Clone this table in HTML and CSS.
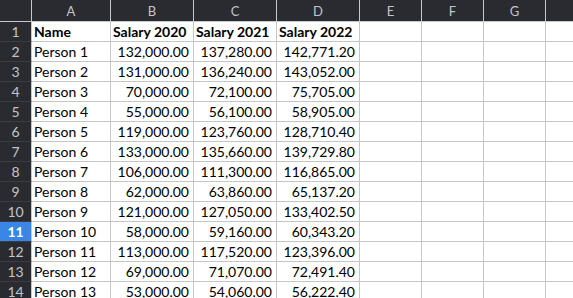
FILE: index.html
```html
<!DOCTYPE html>
<html>
<head>
<meta charset="utf-8">
<link rel="stylesheet" href="styles.css">
</head>
<body>
<div class="sheet">
  <div class="ch corner"></div>
  <div class="ch">A</div><div class="ch">B</div><div class="ch">C</div><div class="ch">D</div><div class="ch">E</div><div class="ch">F</div><div class="ch">G</div><div class="ch last"></div>

  <div class="rh">1</div><div class="c b">Name</div><div class="c b">Salary 2020</div><div class="c b">Salary 2021</div><div class="c b">Salary 2022</div><div class="c"></div><div class="c"></div><div class="c"></div><div class="c last"></div>
  <div class="rh">2</div><div class="c">Person 1</div><div class="c n">132,000.00</div><div class="c n">137,280.00</div><div class="c n">142,771.20</div><div class="c"></div><div class="c"></div><div class="c"></div><div class="c last"></div>
  <div class="rh">3</div><div class="c">Person 2</div><div class="c n">131,000.00</div><div class="c n">136,240.00</div><div class="c n">143,052.00</div><div class="c"></div><div class="c"></div><div class="c"></div><div class="c last"></div>
  <div class="rh">4</div><div class="c">Person 3</div><div class="c n">70,000.00</div><div class="c n">72,100.00</div><div class="c n">75,705.00</div><div class="c"></div><div class="c"></div><div class="c"></div><div class="c last"></div>
  <div class="rh">5</div><div class="c">Person 4</div><div class="c n">55,000.00</div><div class="c n">56,100.00</div><div class="c n">58,905.00</div><div class="c"></div><div class="c"></div><div class="c"></div><div class="c last"></div>
  <div class="rh">6</div><div class="c">Person 5</div><div class="c n">119,000.00</div><div class="c n">123,760.00</div><div class="c n">128,710.40</div><div class="c"></div><div class="c"></div><div class="c"></div><div class="c last"></div>
  <div class="rh">7</div><div class="c">Person 6</div><div class="c n">133,000.00</div><div class="c n">135,660.00</div><div class="c n">139,729.80</div><div class="c"></div><div class="c"></div><div class="c"></div><div class="c last"></div>
  <div class="rh">8</div><div class="c">Person 7</div><div class="c n">106,000.00</div><div class="c n">111,300.00</div><div class="c n">116,865.00</div><div class="c"></div><div class="c"></div><div class="c"></div><div class="c last"></div>
  <div class="rh">9</div><div class="c">Person 8</div><div class="c n">62,000.00</div><div class="c n">63,860.00</div><div class="c n">65,137.20</div><div class="c"></div><div class="c"></div><div class="c"></div><div class="c last"></div>
  <div class="rh">10</div><div class="c">Person 9</div><div class="c n">121,000.00</div><div class="c n">127,050.00</div><div class="c n">133,402.50</div><div class="c"></div><div class="c"></div><div class="c"></div><div class="c last"></div>
  <div class="rh sel">11</div><div class="c">Person 10</div><div class="c n">58,000.00</div><div class="c n">59,160.00</div><div class="c n">60,343.20</div><div class="c"></div><div class="c"></div><div class="c"></div><div class="c last"></div>
  <div class="rh">12</div><div class="c">Person 11</div><div class="c n">113,000.00</div><div class="c n">117,520.00</div><div class="c n">123,396.00</div><div class="c"></div><div class="c"></div><div class="c"></div><div class="c last"></div>
  <div class="rh">13</div><div class="c">Person 12</div><div class="c n">69,000.00</div><div class="c n">71,070.00</div><div class="c n">72,491.40</div><div class="c"></div><div class="c"></div><div class="c"></div><div class="c last"></div>
  <div class="rh">14</div><div class="c">Person 13</div><div class="c n">53,000.00</div><div class="c n">54,060.00</div><div class="c n">56,222.40</div><div class="c"></div><div class="c"></div><div class="c"></div><div class="c last"></div>
</div>
</body>
</html>
```
FILE: styles.css
```css
html, body {
  margin: 0;
  padding: 0;
  background: #ffffff;
  overflow: hidden;
}
.sheet {
  display: grid;
  grid-template-columns: 32px 79px 83px 83px 83px 62px 62px 62px 1fr;
  grid-template-rows: 22px;
  grid-auto-rows: 20px;
  width: 573px;
  font-family: Lato, "Liberation Sans", sans-serif;
}
.ch {
  box-sizing: border-box;
  background: #2a2b30;
  color: #c4c4c6;
  font-size: 13px;
  display: flex;
  align-items: center;
  justify-content: center;
  border-right: 1px solid #c8c8c8;
  border-bottom: 1px solid #c8c8c8;
  padding-top: 1px;
}
.ch.corner {
  border-right: 1px solid #c8c8c8;
}
.ch.last {
  border-right: none;
}
.rh {
  box-sizing: border-box;
  background: #2a2b30;
  color: #c4c4c6;
  font-size: 14px;
  display: flex;
  align-items: center;
  justify-content: center;
  border-bottom: 1px solid #3c3d42;
  border-right: 1px solid #c8c8c8;
}
.rh.sel {
  background: #3a86e6;
  color: #ffffff;
  font-weight: bold;
}
.c {
  box-sizing: border-box;
  border-right: 1px solid #c6c6c6;
  border-bottom: 1px solid #c6c6c6;
  font-size: 14px;
  color: #000;
  display: flex;
  align-items: center;
  padding: 0 3px 0 2px;
  white-space: nowrap;
  overflow: hidden;
}
.c.last {
  border-right: none;
}
.c.b {
  font-weight: bold;
}
.c.n {
  justify-content: flex-end;
  padding-right: 4px;
}
```
